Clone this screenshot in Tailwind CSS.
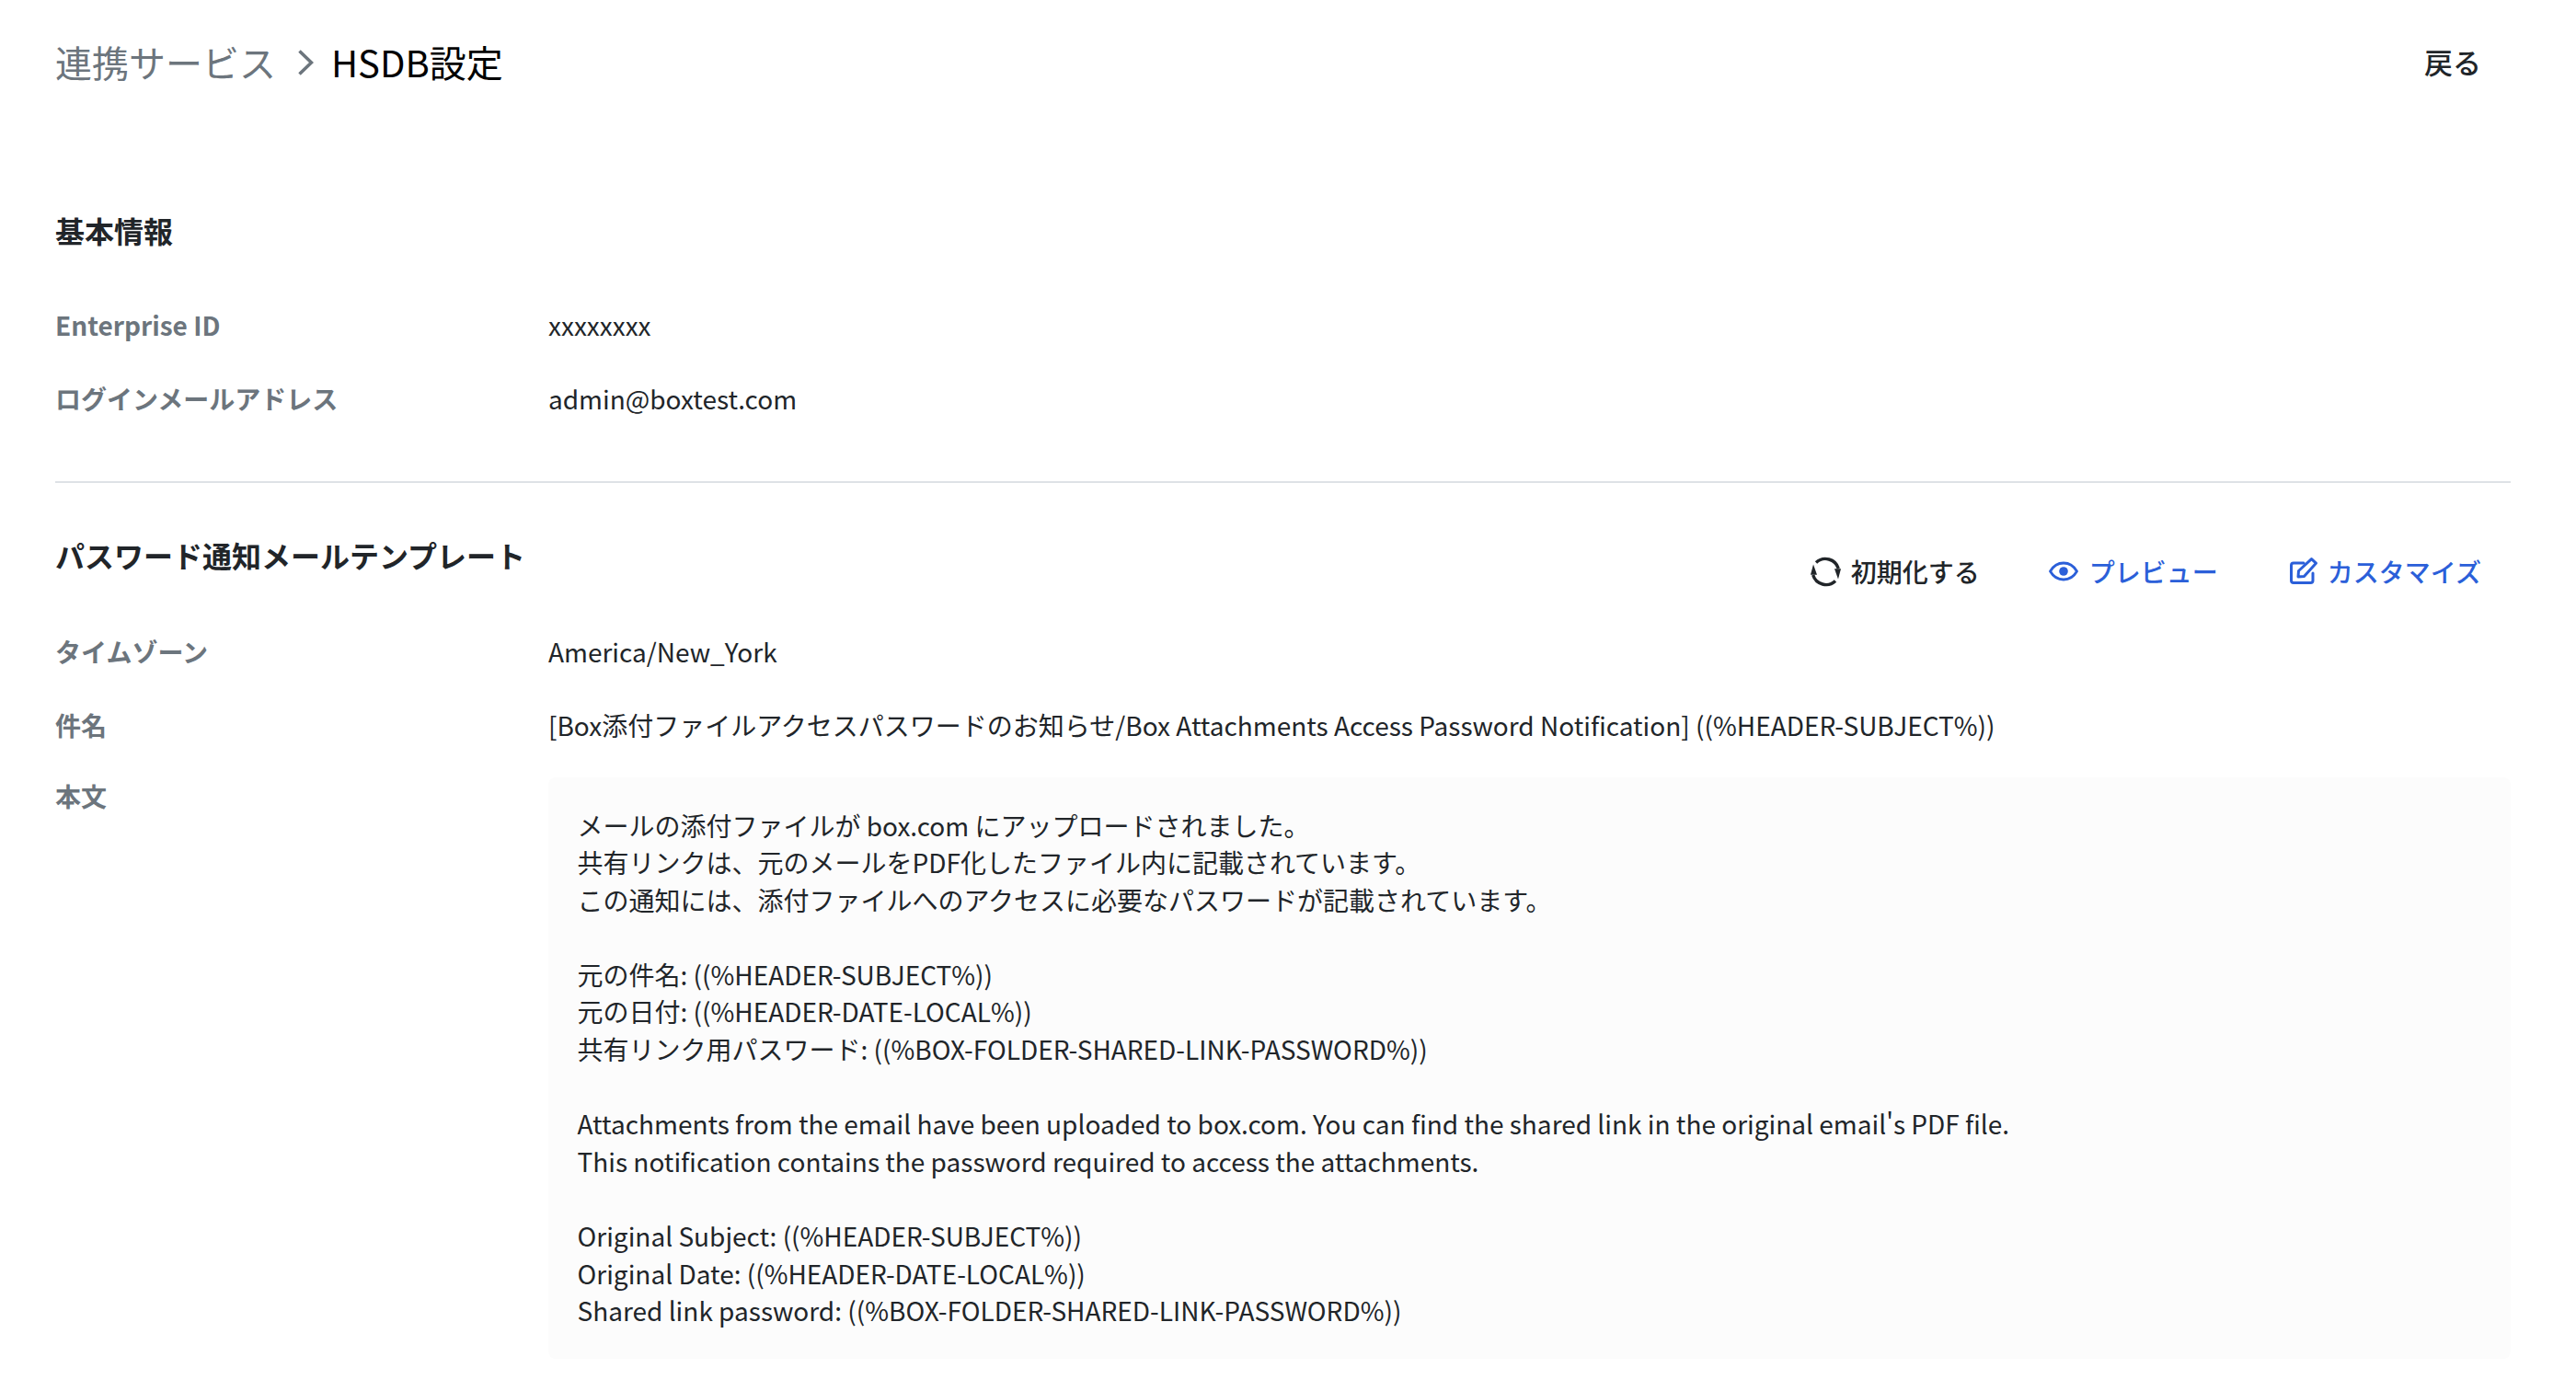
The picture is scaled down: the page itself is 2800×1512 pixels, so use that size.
<!DOCTYPE html>
<html lang="ja">
<head>
<meta charset="utf-8">
<title>HSDB設定</title>
<script src="https://cdn.jsdelivr.net/npm/@tailwindcss/browser@4"></script>
</head>
<body class="bg-white">
<div class="w-[2800px] h-[1512px] overflow-hidden pl-[60px] pr-[71px] text-[28px] leading-[40.6px] text-[#212529] font-['Noto_Sans_CJK_JP','Noto_Sans',sans-serif]">
  <header class="h-[136px] pb-[3px] flex items-center justify-between">
    <div class="flex items-center text-[40px] leading-[56px]">
      <span class="text-[#6c757d]">連携サービス</span>
      <svg class="w-[24px] h-[32px] ml-[17px] mr-[19px] mt-[3px]" viewBox="0 0 24 32" fill="none" stroke="#6c757d" stroke-width="3.6" stroke-linejoin="miter"><path d="M8.5 3.5 L21.5 16 L8.5 28.5"/></svg>
      <span class="text-black">HSDB設定</span>
    </div>
    <span class="pr-[32px] pt-[2px] text-[31px] font-medium">戻る</span>
  </header>

  <h2 class="mt-[91px] h-[46px] text-[32px] leading-[46px] font-bold">基本情報</h2>
  <dl class="mt-[40px]">
    <div class="h-[80px] flex items-center">
      <dt class="w-[536px] font-bold text-[#6c757d]">Enterprise ID</dt>
      <dd>xxxxxxxx</dd>
    </div>
    <div class="h-[80px] flex items-center">
      <dt class="w-[536px] font-bold text-[#6c757d]">ログインメールアドレス</dt>
      <dd>admin@boxtest.com</dd>
    </div>
  </dl>
  <hr class="mt-[50px] border-0 border-t-2 border-[#dee2e6]">

  <div class="mt-[55px] h-[88px] flex items-start justify-between">
    <h2 class="text-[32px] leading-[46px] font-bold">パスワード通知メールテンプレート</h2>
    <div class="mt-[18px] pr-[32px] flex items-center gap-[75px] font-medium leading-[46px]">
      <button class="flex items-center gap-[11px]">
        <svg class="w-[33px] h-[33px]" viewBox="0 0 33 33" fill="none" stroke="#212529" stroke-width="3.4">
          <path d="M6 6.5 A14.8 14.8 0 0 1 30.3 13"/>
          <path d="M2.7 20 A14.8 14.8 0 0 0 27 26.5"/>
          <path d="M0 19.8 L3 8.5 L7 19.8 Z" fill="#212529" stroke="none"/>
          <path d="M26 13.2 L30 24.5 L33 13.2 Z" fill="#212529" stroke="none"/>
        </svg>
        <span>初期化する</span>
      </button>
      <div class="flex items-center gap-[78px]">
      <button class="flex items-center gap-[12px] text-[#2b5fd9]">
        <svg class="w-[32px] h-[22px]" viewBox="0 0 32 22" fill="none" stroke="#2b5fd9" stroke-width="2.8">
          <path d="M1.5 11 C5 5 10 2 16 2 S27 5 30.5 11 C27 17 22 20 16 20 S5 17 1.5 11 Z" stroke-linejoin="round"/>
          <circle cx="16" cy="11" r="4.8" fill="#2b5fd9" stroke="none"/>
        </svg>
        <span>プレビュー</span>
      </button>
      <button class="flex items-center gap-[11px] text-[#2b5fd9]">
        <svg class="w-[30px] h-[30px] mb-[1px]" viewBox="0 0 30 30" fill="none" stroke="#2b5fd9" stroke-width="3" stroke-linecap="round" stroke-linejoin="round">
          <path d="M15 6 H4 Q1.5 6 1.5 8.5 V25 Q1.5 27.5 4 27.5 H22.5 Q25 27.5 25 25 V17"/>
          <path d="M9 21 L9.5 14.5 L23.5 1.6 L28.4 6.2 L15.5 20.5 Z"/>
        </svg>
        <span>カスタマイズ</span>
      </button>
      </div>
    </div>
  </div>

  <dl>
    <div class="h-[80px] flex items-center">
      <dt class="w-[536px] font-bold text-[#6c757d]">タイムゾーン</dt>
      <dd>America/New_York</dd>
    </div>
    <div class="h-[80px] flex items-center">
      <dt class="w-[536px] font-bold text-[#6c757d]">件名</dt>
      <dd>[Box添付ファイルアクセスパスワードのお知らせ/Box Attachments Access Password Notification] ((%HEADER-SUBJECT%))</dd>
    </div>
    <div class="mt-[17px] flex items-start">
      <dt class="w-[536px] font-bold text-[#6c757d]">本文</dt>
      <dd class="flex-1 bg-[#fcfcfc] rounded-lg pt-[31.5px] pb-[32.5px] px-[31.5px] whitespace-pre-line">メールの添付ファイルが box.com にアップロードされました。
共有リンクは、元のメールをPDF化したファイル内に記載されています。
この通知には、添付ファイルへのアクセスに必要なパスワードが記載されています。

元の件名: ((%HEADER-SUBJECT%))
元の日付: ((%HEADER-DATE-LOCAL%))
共有リンク用パスワード: ((%BOX-FOLDER-SHARED-LINK-PASSWORD%))

Attachments from the email have been uploaded to box.com. You can find the shared link in the original email's PDF file.
This notification contains the password required to access the attachments.

Original Subject: ((%HEADER-SUBJECT%))
Original Date: ((%HEADER-DATE-LOCAL%))
Shared link password: ((%BOX-FOLDER-SHARED-LINK-PASSWORD%))</dd>
    </div>
  </dl>
</div>
</body>
</html>
